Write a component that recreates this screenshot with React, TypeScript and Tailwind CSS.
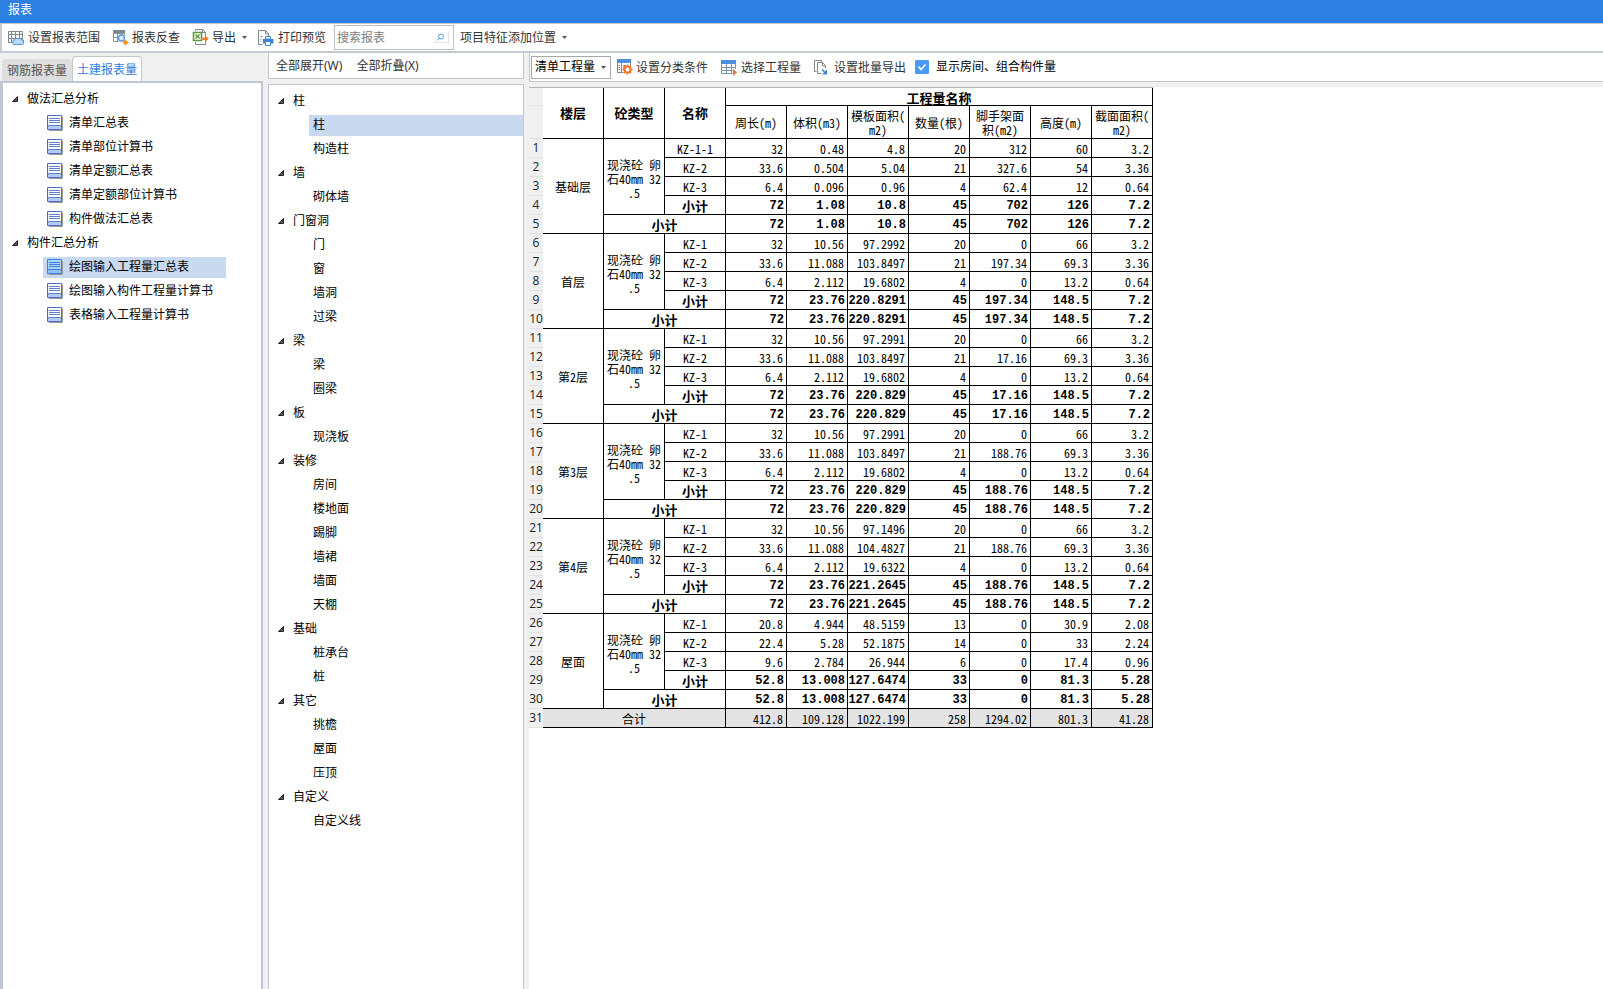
import type { ReactNode } from 'react';

const UI_FONT = "font-['Noto_Sans','Noto_Sans_CJK_SC',sans-serif]";

const CATEGORY_TREE: [string, string[]][] = [
  ['做法汇总分析', ['清单汇总表', '清单部位计算书', '清单定额汇总表', '清单定额部位计算书', '构件做法汇总表']],
  ['构件汇总分析', ['绘图输入工程量汇总表', '绘图输入构件工程量计算书', '表格输入工程量计算书']],
];

const COMPONENT_TREE: [string, string[]][] = [
  ['柱', ['柱', '构造柱']],
  ['墙', ['砌体墙']],
  ['门窗洞', ['门', '窗', '墙洞', '过梁']],
  ['梁', ['梁', '圈梁']],
  ['板', ['现浇板']],
  ['装修', ['房间', '楼地面', '踢脚', '墙裙', '墙面', '天棚']],
  ['基础', ['桩承台', '桩']],
  ['其它', ['挑檐', '屋面', '压顶']],
  ['自定义', ['自定义线']],
];

const COLUMNS = ['周长(m)', '体积(m3)', '模板面积(\nm2)', '数量(根)', '脚手架面\n积(m2)', '高度(m)', '截面面积(\nm2)'];

type Floor = { name: string; rows: [string, string[]][]; total: string[] };

const FLOORS: Floor[] = [
  {
    name: '基础层',
    rows: [
      ['KZ-1-1', ['32', '0.48', '4.8', '20', '312', '60', '3.2']],
      ['KZ-2', ['33.6', '0.504', '5.04', '21', '327.6', '54', '3.36']],
      ['KZ-3', ['6.4', '0.096', '0.96', '4', '62.4', '12', '0.64']],
    ],
    total: ['72', '1.08', '10.8', '45', '702', '126', '7.2'],
  },
  {
    name: '首层',
    rows: [
      ['KZ-1', ['32', '10.56', '97.2992', '20', '0', '66', '3.2']],
      ['KZ-2', ['33.6', '11.088', '103.8497', '21', '197.34', '69.3', '3.36']],
      ['KZ-3', ['6.4', '2.112', '19.6802', '4', '0', '13.2', '0.64']],
    ],
    total: ['72', '23.76', '220.8291', '45', '197.34', '148.5', '7.2'],
  },
  {
    name: '第2层',
    rows: [
      ['KZ-1', ['32', '10.56', '97.2991', '20', '0', '66', '3.2']],
      ['KZ-2', ['33.6', '11.088', '103.8497', '21', '17.16', '69.3', '3.36']],
      ['KZ-3', ['6.4', '2.112', '19.6802', '4', '0', '13.2', '0.64']],
    ],
    total: ['72', '23.76', '220.829', '45', '17.16', '148.5', '7.2'],
  },
  {
    name: '第3层',
    rows: [
      ['KZ-1', ['32', '10.56', '97.2991', '20', '0', '66', '3.2']],
      ['KZ-2', ['33.6', '11.088', '103.8497', '21', '188.76', '69.3', '3.36']],
      ['KZ-3', ['6.4', '2.112', '19.6802', '4', '0', '13.2', '0.64']],
    ],
    total: ['72', '23.76', '220.829', '45', '188.76', '148.5', '7.2'],
  },
  {
    name: '第4层',
    rows: [
      ['KZ-1', ['32', '10.56', '97.1496', '20', '0', '66', '3.2']],
      ['KZ-2', ['33.6', '11.088', '104.4827', '21', '188.76', '69.3', '3.36']],
      ['KZ-3', ['6.4', '2.112', '19.6322', '4', '0', '13.2', '0.64']],
    ],
    total: ['72', '23.76', '221.2645', '45', '188.76', '148.5', '7.2'],
  },
  {
    name: '屋面',
    rows: [
      ['KZ-1', ['20.8', '4.944', '48.5159', '13', '0', '30.9', '2.08']],
      ['KZ-2', ['22.4', '5.28', '52.1875', '14', '0', '33', '2.24']],
      ['KZ-3', ['9.6', '2.784', '26.944', '6', '0', '17.4', '0.96']],
    ],
    total: ['52.8', '13.008', '127.6474', '33', '0', '81.3', '5.28'],
  },
];

const GRAND_TOTAL = ['412.8', '109.128', '1022.199', '258', '1294.02', '801.3', '41.28'];

function RangeIcon() {
  return (
    <svg width="16" height="16" viewBox="0 0 16 16" fill="none">
      <path d="M.5 1.5h14v11H.5zM.5 4.5h14M.5 8.5h14M3.500 1.500v11M7.500 1.500v7M11.500 1.500v7" stroke="#7c8791" />
      <path d="M5 13.500v-3.500h2V8.500h6V10h2.500v3.500q0 1-1 1H6q-1 0-1-1z" fill="#b9dbfa" stroke="#5b97d8" />
    </svg>
  );
}

function LookupIcon() {
  return (
    <svg width="17" height="17" viewBox="0 0 17 17" fill="none">
      <path d="M1 1h12v3H1z" fill="#7c8791" />
      <path d="M1.500 1.500v11h5M1.500 8.500h4M5.500 4v8.500M9.500 4v2M12.500 4v2M1.500 4.500h11" stroke="#8a949d" />
      <circle cx="9.500" cy="9" r="3" fill="#d8eafc" stroke="#5f94d4" strokeWidth="1.300" />
      <path d="M13.500 10.500l3 3-3 3-3-3z" fill="#f5941e" />
    </svg>
  );
}

function ExportIcon() {
  return (
    <svg width="17" height="17" viewBox="0 0 17 17" fill="none">
      <path d="M3.500 2V.5h7l3 3V7M10.500.5v3h3M3.500 13v2.500h10V12" stroke="#7c8791" />
      <path d="M1.500 3.500h8v8h-8z" fill="#fff" stroke="#5c9a3c" strokeWidth="1.600" />
      <path d="M3.500 5.500l4 4M7.500 5.500l-4 4" stroke="#5c9a3c" strokeWidth="1.500" />
      <path d="M10.500 8.500h2.500V6l3.500 3.700L13 13.400V11h-2.500z" fill="#f07c28" />
    </svg>
  );
}

function PrintIcon() {
  return (
    <svg width="16" height="16" viewBox="0 0 16 16" fill="none">
      <path d="M4.500 14.500h-4V.5h7l3 3V6M7.500.5v3.500h3" stroke="#7c8791" />
      <path d="M2.500 6.500h2M2.500 9.500h1M2.500 11.500h1" stroke="#7c8791" />
      <path d="M7.500 6.500h5V9h-5z" fill="#fff" stroke="#3f85d6" />
      <path d="M5 9h10.500v4.500H5z" fill="#3f85d6" />
      <path d="M7.500 11.500h5v4h-5z" fill="#fff" stroke="#3f85d6" />
    </svg>
  );
}

function ConditionIcon() {
  return (
    <svg width="17" height="17" viewBox="0 0 17 17" fill="none">
      <path d="M1 0h14v4H1z" fill="#4a90dc" />
      <path d="M1.500 4v9.500h6M5.500 4v9.500M14.500 4v3M2.500 6.500h1.500M2.500 8.500h1.500M2.500 10.500h1.500M7 6.500h3M7 8.500h1" stroke="#7c8791" />
      <circle cx="11.500" cy="10.500" r="3" stroke="#ee7a30" strokeWidth="2" />
      <path d="M11.500 5.500v2M11.500 13.500v2M6.500 10.500h2M14.500 10.500h2M8 7l1.300 1.300M13.700 12.700L15 14M15 7l-1.300 1.300M9.300 12.700L8 14" stroke="#ee7a30" strokeWidth="1.800" />
    </svg>
  );
}

function PickIcon() {
  return (
    <svg width="17" height="16" viewBox="0 0 17 16" fill="none">
      <path d="M0 0h15v4H0z" fill="#4a90dc" />
      <path d="M.5 4v9.500h11M14.500 4v5M.5 7.500h14M.5 10.500h11M5.500 4v9.500M10.500 4v9.500" stroke="#7b93ad" />
      <path d="M12 8.500l4 4-4 3.500z" fill="#ee7a30" />
    </svg>
  );
}

function BatchIcon() {
  return (
    <svg width="14" height="16" viewBox="0 0 14 16" fill="none">
      <path d="M2.500 11.500h-2V.5h7v2M3.500 13.500V2.500h5l3 3V8M8.500 2.500v3.500h3M3.500 13.500H7" stroke="#7c8791" />
      <path d="M8 9.500l3 3" stroke="#3f85d6" strokeWidth="1.600" />
      <path d="M13 9.500v5H8z" fill="#3f85d6" />
    </svg>
  );
}

function ReportIcon({ active }: { active: boolean }) {
  return (
    <svg width="16" height="16" viewBox="0 0 16 16" fill="none">
      <path d="M2 15.500h13.500V2" stroke="#9a9a94" />
      <path d="M.5.5h14v14H.5z" fill={active ? '#a9d4fb' : '#fff'} stroke={active ? '#3a7fd8' : '#4a6cc4'} />
      <path d="M1 10h13v4H1z" fill={active ? '#8fc2fb' : '#b3c9fa'} />
      <path d="M2 3.500h11M2 5.500h11M2 7.500h11M1 10.500h13" stroke={active ? '#3a7fd8' : '#5f7fd0'} />
    </svg>
  );
}

function Caret() {
  return (
    <svg width="5" height="3" viewBox="0 0 5 3" className="shrink-0">
      <path d="M0 0h5L2.500 3z" fill="#555" />
    </svg>
  );
}

function Expander() {
  return (
    <svg width="6" height="6" viewBox="0 0 6 6" className="shrink-0">
      <path d="M5.500.5v5h-5z" fill="#555" stroke="#222" />
    </svg>
  );
}

function ToolButton({ icon, children, menu }: { icon?: ReactNode; children: ReactNode; menu?: boolean }) {
  return (
    <button type="button" className="flex h-5 shrink-0 items-center text-[#333] whitespace-nowrap">
      {icon && <span className="flex w-5 shrink-0 items-center">{icon}</span>}
      <span>{children}</span>
      {menu && (
        <span className="ml-1.5">
          <Caret />
        </span>
      )}
    </button>
  );
}

const INDEX_CELL = 'border-b border-[#e2e2e2] bg-[#f0f0f0] p-0';

function SheetRow({ index, children, className }: { index?: number; children: ReactNode; className?: string }) {
  return (
    <tr className={className}>
      <th
        scope="row"
        className={`${INDEX_CELL} h-[19px] text-center font-['Open_Sans',sans-serif] text-xs leading-4 font-normal text-[#222]`}
      >
        <span className="-mx-1">{index}</span>
      </th>
      {children}
    </tr>
  );
}

const CELL = 'border-r border-b border-black p-0';

function Values({ items, bold }: { items: string[]; bold?: boolean }) {
  return (
    <>
      {items.map((value, i) => (
        <td
          key={i}
          className={`${CELL} pt-0.5 text-right ${bold ? "pr-0.5 font-['Liberation_Mono',monospace] font-bold" : 'pr-[3px]'}`}
        >
          {value}
        </td>
      ))}
    </>
  );
}

function QuantityTable() {
  return (
    <table className="w-[624px] table-fixed border-separate border-spacing-0 font-['Noto_Sans_Mono_CJK_SC','Liberation_Mono','Noto_Sans_CJK_SC',monospace] text-xs leading-[14px] text-black">
      <colgroup>
        <col className="w-[14px]" />
        {Array.from({ length: 10 }, (_, i) => (
          <col key={i} className="w-[61px]" />
        ))}
      </colgroup>
      <thead>
        <tr>
          <td className={`${INDEX_CELL} h-[18px]`} />
          {['楼层', '砼类型', '名称'].map((label) => (
            <th key={label} rowSpan={2} scope="col" className={`${CELL} text-[13px]`}>
              {label}
            </th>
          ))}
          <th colSpan={7} scope="colgroup" className={`${CELL} pt-0.5 text-[13px]`}>
            工程量名称
          </th>
        </tr>
        <tr>
          <td className={`${INDEX_CELL} h-[33px]`} />
          {COLUMNS.map((label) => (
            <th key={label} scope="col" className={`${CELL} pt-0.5 font-normal whitespace-pre`}>
              {label}
            </th>
          ))}
        </tr>
      </thead>
      <tbody>
        {FLOORS.map((floor, f) => [
          ...floor.rows.map(([name, values], r) => (
            <SheetRow key={`${f}-${r}`} index={f * 5 + r + 1}>
              {r === 0 && (
                <>
                  <td rowSpan={5} className={`${CELL} pt-0.5 text-center`}>
                    {floor.name}
                  </td>
                  <td rowSpan={4} className={`${CELL} pt-1 text-center whitespace-pre`}>
                    {'现浇砼 卵\n石40mm 32\n.5'}
                  </td>
                </>
              )}
              <td className={`${CELL} pt-0.5 text-center`}>{name}</td>
              <Values items={values} />
            </SheetRow>
          )),
          <SheetRow key={`${f}-type`} index={f * 5 + 4}>
            <td className={`${CELL} pt-0.5 text-center text-[13px] font-bold`}>小计</td>
            <Values items={floor.total} bold />
          </SheetRow>,
          <SheetRow key={`${f}-floor`} index={f * 5 + 5}>
            <td colSpan={2} className={`${CELL} pt-0.5 text-center text-[13px] font-bold`}>
              小计
            </td>
            <Values items={floor.total} bold />
          </SheetRow>,
        ])}
        <SheetRow index={31} className="bg-[#e3e3e3]">
          <td colSpan={3} className={`${CELL} pt-0.5 text-center`}>
            合计
          </td>
          <Values items={GRAND_TOTAL} />
        </SheetRow>
      </tbody>
    </table>
  );
}

function ReportsPane() {
  return (
    <aside className="flex w-[263px] shrink-0 flex-col">
      <div role="tablist" className="flex h-7 items-end pl-0.5">
        <button type="button" role="tab" aria-selected="false" className="h-[22px] w-[70px] rounded-t-sm bg-[#dedede] pt-0.5 text-center whitespace-nowrap text-[#555]">
          钢筋报表量
        </button>
        <button type="button" role="tab" aria-selected="true" className="h-[25px] w-[70px] rounded-t-sm border border-b-0 border-[#c3c7cc] bg-white pt-0.5 text-center whitespace-nowrap text-[#2d80e0]">
          土建报表量
        </button>
      </div>
      <nav className="flex-1 border-t-2 border-r-2 border-l-[3px] border-[#c0c6cf] bg-white pt-1">
        {CATEGORY_TREE.map(([group, items]) => (
          <div key={group}>
            <button type="button" className="flex h-6 items-center gap-[9px] pl-[9px]">
              <Expander />
              {group}
            </button>
            {items.map((item) => {
              const active = item === '绘图输入工程量汇总表';
              return (
                <div key={item} className="flex h-6 items-center pl-10">
                  <button type="button" className={`flex h-[21px] items-center gap-1.5 pl-1 ${active ? 'w-[183px] bg-[#c9d9f0]' : ''}`}>
                    <ReportIcon active={active} />
                    {item}
                  </button>
                </div>
              );
            })}
          </div>
        ))}
      </nav>
    </aside>
  );
}

function ComponentsPane() {
  return (
    <section className="flex w-64 shrink-0 flex-col gap-[5px]">
      <div className="flex h-[26px] items-center gap-[14px] border border-t-0 border-[#c3c7cc] bg-white pl-[7px]">
        <ToolButton>全部展开(W)</ToolButton>
        <ToolButton>全部折叠(X)</ToolButton>
      </div>
      <nav className="flex-1 border border-b-0 border-[#c3c7cc] bg-white pt-1">
        {COMPONENT_TREE.map(([group, items]) => (
          <div key={group}>
            <button type="button" className="flex h-6 items-center gap-[9px] pl-[9px]">
              <Expander />
              {group}
            </button>
            {items.map((item) => (
              <div key={item} className="flex h-6 items-center pl-10">
                <button type="button" className={`flex h-[21px] flex-1 items-center pl-1 ${group === '柱' && item === '柱' ? 'bg-[#c9d9f0]' : ''}`}>
                  {item}
                </button>
              </div>
            ))}
          </div>
        ))}
      </nav>
    </section>
  );
}

export default function App() {
  return (
    <div className={`flex min-h-screen flex-col bg-[#f0f0f0] text-xs leading-4 text-black ${UI_FONT}`}>
      <header className="flex h-[23px] items-center bg-[#2d7fe2] pb-1 pl-2 text-white">
        <h1>报表</h1>
      </header>

      <div className="flex h-[30px] items-center border-t border-b-2 border-l-2 border-[#c6cbd1] bg-white pl-1.5">
        <div className="flex items-center gap-3">
          <ToolButton icon={<RangeIcon />}>设置报表范围</ToolButton>
          <ToolButton icon={<LookupIcon />}>报表反查</ToolButton>
          <ToolButton icon={<ExportIcon />} menu>
            导出
          </ToolButton>
        </div>
        <div className="ml-[11px] flex items-center">
          <ToolButton icon={<PrintIcon />}>打印预览</ToolButton>
          <label className="mr-1.5 ml-2 flex h-[25px] w-[120px] items-center border border-[#b9c0c8] bg-white pr-1 pl-0.5">
            <input type="search" aria-label="搜索报表" placeholder="搜索报表" className="w-0 min-w-0 flex-1 bg-transparent outline-none placeholder:text-[#7d7d7d]" />
            <span className="flex h-[11px] w-4 items-center justify-center border-r border-b border-[#e2e2e2]">
              <svg width="9" height="8" viewBox="0 0 9 8" fill="none" stroke="#4a9be8">
                <circle cx="5" cy="3.500" r="2.500" />
                <path d="M3 5.500L1 7.500" />
              </svg>
            </span>
          </label>
          <ToolButton menu>项目特征添加位置</ToolButton>
        </div>
      </div>

      <div className="flex flex-1">
        <ReportsPane />
        <div className="w-[5px] shrink-0" />
        <ComponentsPane />
        <div className="w-[5px] shrink-0" />
        <main className="flex min-w-0 flex-1 flex-col">
          <div className="flex h-[29px] items-center border-b border-l border-[#c3c7cc] bg-white pl-px">
            <div className="relative flex h-[23px] w-20 shrink-0 items-center border border-[#a9a9a9] bg-white">
              <select aria-label="工程量类型" className="h-full w-full appearance-none bg-transparent pl-[3px] outline-none">
                <option>清单工程量</option>
              </select>
              <span className="pointer-events-none absolute right-1 flex">
                <Caret />
              </span>
            </div>
            <div className="ml-[5px] flex items-center gap-[13px] pt-px">
              <ToolButton icon={<ConditionIcon />}>设置分类条件</ToolButton>
              <ToolButton icon={<PickIcon />}>选择工程量</ToolButton>
              <ToolButton icon={<BatchIcon />}>设置批量导出</ToolButton>
            </div>
            <label className="ml-[9px] flex items-center gap-[7px] whitespace-nowrap">
              <span className="relative flex size-[14px]">
                <input type="checkbox" defaultChecked className="peer size-[14px] appearance-none rounded-[1px] border border-[#4a9af5] checked:bg-[#4a9af5]" />
                <svg width="14" height="14" viewBox="0 0 14 14" fill="none" className="pointer-events-none absolute hidden peer-checked:block">
                  <path d="M3.500 6.500l2.500 3 4.500-5" stroke="#fff" strokeWidth="1.600" />
                </svg>
              </span>
              显示房间、组合构件量
            </label>
          </div>
          <div className="mt-[5px] flex flex-1 items-start bg-white">
            <div className="border-t border-[#b5b5b5]">
              <QuantityTable />
            </div>
          </div>
        </main>
      </div>
    </div>
  );
}
